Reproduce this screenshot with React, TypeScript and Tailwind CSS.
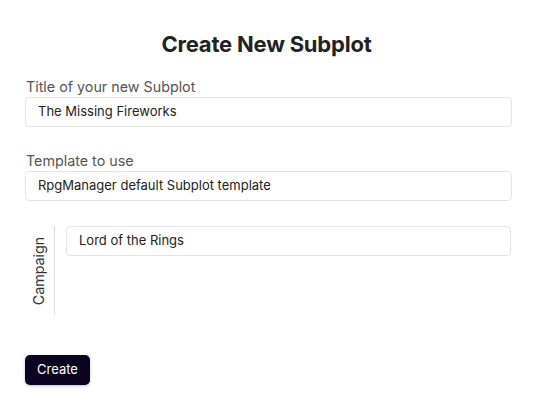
export default function App() {
  return (
    <div className="min-h-screen bg-white px-[25px] pt-[30px] font-['Inter',sans-serif] text-[#222]">
      <h1 className="text-center text-[22px] font-bold leading-[28px] tracking-[-0.2px]">
        Create New Subplot
      </h1>

      <div className="mt-[20px]">
        <label className="block pl-px text-[14.3px] leading-[18px] text-[#555]">
          Title of your new Subplot
        </label>
        <div className="mt-px flex h-[30px] w-[487px] items-center rounded-[4px] border border-[#e4e4e4] px-[12px] text-[13px]">
          The Missing Fireworks
        </div>
      </div>

      <div className="mt-[25px]">
        <label className="block pl-px text-[14.3px] leading-[18px] text-[#555]">
          Template to use
        </label>
        <div className="mt-px flex h-[30px] w-[487px] items-center rounded-[4px] border border-[#e4e4e4] px-[12px] text-[13px]">
          RpgManager default Subplot template
        </div>
      </div>

      <div className="mt-[25px] flex h-[89px]">
        <div className="flex w-[30px] items-center justify-center border-r border-[#dcdcdc]">
          <span className="-rotate-90 whitespace-nowrap text-[14.3px] leading-[18px] text-[#333]">
            Campaign
          </span>
        </div>
        <div className="pl-[11px]">
          <div className="flex h-[30px] w-[445px] items-center rounded-[4px] border border-[#e4e4e4] px-[12px] text-[13px]">
            Lord of the Rings
          </div>
        </div>
      </div>

      <button className="mt-[40px] h-[30px] rounded-[5px] bg-[#0b0320] px-[12px] text-[13px] text-white shadow-[0_1px_3px_rgba(0,0,0,0.25)]">
        Create
      </button>
    </div>
  );
}
